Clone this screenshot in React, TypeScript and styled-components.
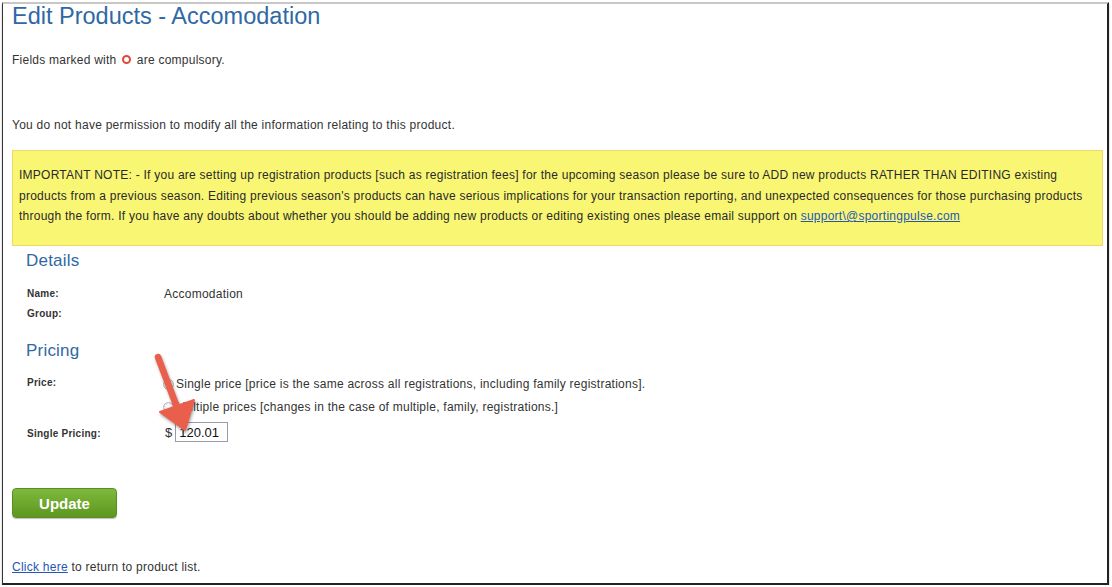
import styled, { createGlobalStyle } from "styled-components";

const GlobalStyle = createGlobalStyle`
  html, body {
    margin: 0;
    padding: 0;
    background: #fff;
  }
  body {
    font-family: "Liberation Sans", Arial, sans-serif;
    font-size: 12px;
    letter-spacing: 0.25px;
    color: #333;
  }
`;

const Frame = styled.div`
  position: relative;
  box-sizing: border-box;
  margin: 2px 3px 0 2px;
  height: 583px;
  border-top: 2px solid #c8c8c8;
  border-left: 1px solid #333;
  border-right: 2px solid #222;
  border-bottom: 2px solid #222;
  box-shadow: 0 2px 2px #bdbdbd;
  padding: 0 4px 0 9px;
`;

const Title = styled.h1`
  margin: -1px 0 0;
  font-size: 23.5px;
  line-height: 27px;
  font-weight: normal;
  letter-spacing: 0;
  color: #2f68a4;
`;

const Para = styled.p<{ $top: number }>`
  margin: ${({ $top }) => $top}px 0 0;
  line-height: 16px;
`;

const Required = styled.span`
  display: inline-block;
  width: 5px;
  height: 5px;
  border: 2px solid #e0483c;
  border-radius: 50%;
  margin: 0 2px;
  vertical-align: 0;
`;

const NoteBox = styled.div`
  margin-top: 17px;
  height: 96px;
  box-sizing: border-box;
  background: #f9f674;
  border: 1px solid #efd86a;
  padding: 14px 6px 0 6px;
  line-height: 20.5px;
  color: #2a2a2a;
`;

const Link = styled.a`
  color: #2656b4;
  text-decoration: underline;
`;

const Heading = styled.h2<{ $top: number }>`
  margin: ${({ $top }) => $top}px 0 0 14px;
  font-size: 17px;
  line-height: 20px;
  font-weight: normal;
  letter-spacing: 0.2px;
  color: #2f68a4;
`;

const FormGrid = styled.div<{ $top: number }>`
  display: grid;
  grid-template-columns: 137px 1fr;
  margin: ${({ $top }) => $top}px 0 0 15px;
`;

const Label = styled.div<{ $h?: number }>`
  font-size: 10px;
  font-weight: bold;
  color: #333;
  height: ${({ $h }) => $h ?? 20}px;
  line-height: 20px;
`;

const Value = styled.div<{ $h?: number }>`
  height: ${({ $h }) => $h ?? 20}px;
  line-height: 20px;
  display: flex;
  align-items: flex-start;
`;

const RadioList = styled.div`
  display: flex;
  flex-direction: column;
`;

const RadioRow = styled.label`
  display: flex;
  align-items: center;
  height: 25px;
  margin-top: -2px;
  gap: 2px;
`;

const Radio = styled.input`
  appearance: none;
  width: 11px;
  height: 11px;
  margin: 1px 0 0 -1px;
  border: 1px solid #b5b5b5;
  border-radius: 50%;
  background: radial-gradient(circle at 50% 35%, #fff, #d8d8d8);
`;

const Dollar = styled.span`
  font-size: 13px;
  letter-spacing: 0;
  margin: 0 3px 0 1px;
  line-height: 18px;
`;

const PriceInput = styled.input`
  box-sizing: border-box;
  width: 53px;
  height: 20px;
  border: 1px solid #9a9aa8;
  padding: 1px 3px;
  font-family: "Liberation Sans", Arial, sans-serif;
  font-size: 13px;
  color: #111;
  margin-top: -2px;
`;

const UpdateButton = styled.button`
  display: block;
  margin-top: 44px;
  width: 105px;
  height: 30px;
  border: 1px solid #5c8c26;
  border-radius: 4px;
  background: linear-gradient(#7dba3c, #5e961f);
  color: #fff;
  font-family: "Liberation Sans", Arial, sans-serif;
  font-size: 15px;
  font-weight: bold;
  box-shadow: 0 1px 1px rgba(0, 0, 0, 0.25);
`;

const Footer = styled.p`
  margin: 41px 0 0;
  line-height: 16px;
`;

const Arrow = styled.svg`
  position: absolute;
  left: 148px;
  top: 344px;
  overflow: visible;
  filter: drop-shadow(1px 2px 1.5px rgba(0, 0, 0, 0.35));
`;

export default function App() {
  return (
    <>
      <GlobalStyle />
      <Frame>
        <Title>Edit Products - Accomodation</Title>
        <Para $top={22}>
          Fields marked with <Required /> are compulsory.
        </Para>
        <Para $top={49}>
          You do not have permission to modify all the information relating to this product.
        </Para>
        <NoteBox>
          IMPORTANT NOTE: - If you are setting up registration products [such as registration fees] for the upcoming season please be sure to ADD new products RATHER THAN EDITING existing
          <br />
          products from a previous season. Editing previous season's products can have serious implications for your transaction reporting, and unexpected consequences for those purchasing products
          <br />
          through the form. If you have any doubts about whether you should be adding new products or editing existing ones please email support on{" "}
          <Link href="#">support\@sportingpulse.com</Link>
        </NoteBox>

        <Heading $top={5}>Details</Heading>
        <FormGrid $top={13}>
          <Label>Name:</Label>
          <Value>Accomodation</Value>
          <Label>Group:</Label>
          <Value />
        </FormGrid>

        <Heading $top={17}>Pricing</Heading>
        <FormGrid $top={12}>
          <Label $h={51}>Price:</Label>
          <RadioList>
            <RadioRow>
              <Radio type="radio" name="price" />
              Single price [price is the same across all registrations, including family registrations].
            </RadioRow>
            <RadioRow>
              <Radio type="radio" name="price" />
              Multiple prices [changes in the case of multiple, family, registrations.]
            </RadioRow>
          </RadioList>
          <Label>Single Pricing:</Label>
          <Value>
            <Dollar>$</Dollar>
            <PriceInput defaultValue="120.01" />
          </Value>
        </FormGrid>

        <UpdateButton>Update</UpdateButton>
        <Footer>
          <Link href="#">Click here</Link> to return to product list.
        </Footer>

        <Arrow width="60" height="90" viewBox="0 0 60 90">
          <line x1="7" y1="9" x2="27" y2="62" stroke="#ea5f4c" strokeWidth="6.5" strokeLinecap="round" />
          <polygon points="9,64 43,52 34,82" fill="#ea5f4c" strokeLinejoin="round" stroke="#ea5f4c" strokeWidth="2" />
        </Arrow>
      </Frame>
    </>
  );
}
